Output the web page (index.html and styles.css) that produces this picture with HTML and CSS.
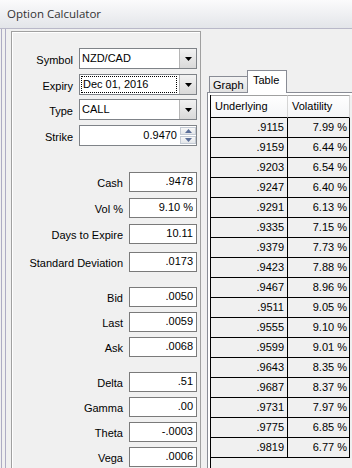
FILE: index.html
```html
<!DOCTYPE html>
<html lang="en">
<head>
    <meta charset="UTF-8">
    <title>Option Calculator</title>
    <link rel="stylesheet" href="styles.css">
</head>
<body>
    <div class="titlebar">Option Calculator</div>
    <div class="frame">
        <div class="frame-body">
            <div class="panel">
                <div class="row combo-row">
                    <label>Symbol</label>
                    <div class="combo">
                        <span class="combo-text">NZD/CAD</span>
                        <span class="drop"><svg width="7" height="4"><polygon points="0,0 7,0 3.5,4" fill="#000"/></svg></span>
                    </div>
                </div>
                <div class="row combo-row">
                    <label>Expiry</label>
                    <div class="combo">
                        <span class="combo-text focused">Dec 01, 2016</span>
                        <span class="drop"><svg width="7" height="4"><polygon points="0,0 7,0 3.5,4" fill="#000"/></svg></span>
                    </div>
                </div>
                <div class="row combo-row tight">
                    <label>Type</label>
                    <div class="combo">
                        <span class="combo-text">CALL</span>
                        <span class="drop"><svg width="7" height="4"><polygon points="0,0 7,0 3.5,4" fill="#000"/></svg></span>
                    </div>
                </div>
                <div class="row combo-row">
                    <label>Strike</label>
                    <div class="combo">
                        <span class="spin-text">0.9470</span>
                        <span class="spin">
                            <span class="spin-btn"><svg width="7" height="4"><polygon points="0,4 7,4 3.5,0" fill="#5b6f99"/></svg></span>
                            <span class="spin-btn"><svg width="7" height="4"><polygon points="0,0 7,0 3.5,4" fill="#5b6f99"/></svg></span>
                        </span>
                    </div>
                </div>

                <div class="row field-row group-first">
                    <label>Cash</label>
                    <div class="field">.9478</div>
                </div>
                <div class="row field-row m6">
                    <label>Vol %</label>
                    <div class="field">9.10 %</div>
                </div>
                <div class="row field-row m6">
                    <label>Days to Expire</label>
                    <div class="field">10.11</div>
                </div>
                <div class="row field-row m8">
                    <label>Standard Deviation</label>
                    <div class="field">.0173</div>
                </div>

                <div class="row field-row section">
                    <label>Bid</label>
                    <div class="field">.0050</div>
                </div>
                <div class="row field-row">
                    <label>Last</label>
                    <div class="field">.0059</div>
                </div>
                <div class="row field-row">
                    <label>Ask</label>
                    <div class="field">.0068</div>
                </div>

                <div class="row field-row section">
                    <label>Delta</label>
                    <div class="field">.51</div>
                </div>
                <div class="row field-row">
                    <label>Gamma</label>
                    <div class="field">.00</div>
                </div>
                <div class="row field-row">
                    <label>Theta</label>
                    <div class="field">-.0003</div>
                </div>
                <div class="row field-row">
                    <label>Vega</label>
                    <div class="field">.0006</div>
                </div>
            </div>

            <div class="tabs">
                <div class="tab-strip">
                    <span class="tab">Graph</span>
                    <span class="tab active">Table</span>
                </div>
                <div class="tab-page">
                    <div class="grid-wrap">
                        <table class="grid">
                            <thead>
                                <tr><th>Underlying</th><th>Volatility</th></tr>
                            </thead>
                            <tbody>
                                <tr><td>.9115</td><td>7.99 %</td></tr>
                                <tr><td>.9159</td><td>6.44 %</td></tr>
                                <tr><td>.9203</td><td>6.54 %</td></tr>
                                <tr><td>.9247</td><td>6.40 %</td></tr>
                                <tr><td>.9291</td><td>6.13 %</td></tr>
                                <tr><td>.9335</td><td>7.15 %</td></tr>
                                <tr><td>.9379</td><td>7.73 %</td></tr>
                                <tr><td>.9423</td><td>7.88 %</td></tr>
                                <tr><td>.9467</td><td>8.96 %</td></tr>
                                <tr><td>.9511</td><td>9.05 %</td></tr>
                                <tr><td>.9555</td><td>9.10 %</td></tr>
                                <tr><td>.9599</td><td>9.01 %</td></tr>
                                <tr><td>.9643</td><td>8.35 %</td></tr>
                                <tr><td>.9687</td><td>8.37 %</td></tr>
                                <tr><td>.9731</td><td>7.97 %</td></tr>
                                <tr><td>.9775</td><td>6.85 %</td></tr>
                                <tr><td>.9819</td><td>6.77 %</td></tr>
                            </tbody>
                        </table>
                    </div>
                </div>
            </div>
        </div>
    </div>
</body>
</html>
```

FILE: styles.css
```css
html, body {
    overflow: hidden;
}
body {
    margin: 0;
    height: 468px;
    background-color: #f0f0f0;
    font-family: "Liberation Sans", Arial, sans-serif;
    font-size: 11px;
    color: #000;
}
.titlebar {
    height: 28px;
    line-height: 28px;
    padding-left: 7px;
    border-bottom: 1px solid #b9b8c8;
    background: linear-gradient(#fbfbfc, #e3e5e9);
    font-family: "Open Sans", sans-serif;
    font-size: 11.5px;
    color: #333;
}
.frame {
    margin-left: 1px;
    border-left: 1px solid #aeacc4;
    height: 460px;
}
.frame-body {
    margin-left: 3px;
    border-left: 1px solid #aeacc4;
    padding-left: 5px;
    height: 100%;
    display: flex;
}

/* left panel */
.panel {
    width: 190px;
    flex-shrink: 0;
    box-sizing: border-box;
    margin-top: 2px;
    padding: 16px 3px 0 0;
    border: 1px solid #a0a0a0;
    border-bottom: none;
    box-shadow: inset 1px 1px #fff;
}
.row {
    display: flex;
}
.row + .row {
    margin-top: 5px;
}
.row label {
    flex: 1;
    text-align: right;
    margin-right: 6px;
    white-space: nowrap;
}
.combo-row {
    height: 21px;
}
.combo-row label {
    padding-top: 5px;
    line-height: 14px;
}
.row.tight {
    margin-top: 4px;
}
.combo {
    width: 118px;
    box-sizing: border-box;
    display: flex;
    border: 1px solid #7f8388;
    background-color: #fff;
}
.combo-text {
    flex: 1;
    padding-left: 2px;
    line-height: 19px;
}
.combo-text.focused {
    margin: 1px 2px 1px 1px;
    padding-left: 1px;
    line-height: 15px;
    border: 1px dotted #000;
}
.drop {
    width: 16px;
    display: flex;
    align-items: center;
    justify-content: center;
    border-left: 1px solid #b5b5b5;
    background: linear-gradient(#f2f2f2, #d9d9d9);
}
.spin-text {
    flex: 1;
    text-align: right;
    padding-right: 3px;
    line-height: 19px;
}
.spin {
    width: 16px;
    display: flex;
    flex-direction: column;
    gap: 1px;
    padding: 1px 0;
}
.spin-btn {
    flex: 1;
    display: flex;
    align-items: center;
    justify-content: center;
    border: 1px solid #c3cad4;
    background: linear-gradient(#f7f7f7, #e3e6ea);
}
.field-row {
    height: 20px;
}
.field-row label {
    padding-top: 3px;
    line-height: 17px;
}
.field {
    width: 68px;
    height: 20px;
    box-sizing: border-box;
    border: 1px solid #7a7a7a;
    background-color: #fff;
    text-align: right;
    padding-right: 3px;
    line-height: 17px;
}
.row.group-first {
    margin-top: 26px;
}
.row.m6 {
    margin-top: 6px;
}
.row.m8 {
    margin-top: 8px;
}
.row.section {
    margin-top: 15px;
}

/* tab control */
.tabs {
    width: 150px;
    flex-shrink: 0;
    margin-left: 6px;
    margin-top: 41px;
    display: flex;
    flex-direction: column;
}
.tab-strip {
    height: 22px;
    display: flex;
    align-items: flex-end;
    padding-left: 2px;
}
.tab {
    flex-shrink: 0;
    width: 40px;
    height: 16px;
    box-sizing: border-box;
    padding-left: 3px;
    border: 1px solid #898c95;
    border-bottom: none;
    background: linear-gradient(#f3f3f3, #e2e2e2);
    line-height: 16px;
    white-space: nowrap;
}
.tab.active {
    position: relative;
    z-index: 1;
    width: 40px;
    height: 23px;
    margin-left: -2px;
    margin-bottom: -1px;
    padding-left: 5px;
    background: #fff;
    line-height: 18px;
}
.tab-page {
    flex: 1;
    display: flex;
    border: 1px solid #898c95;
    background-color: #fff;
    padding: 2px 0 0 2px;
}
.grid-wrap {
    flex: 1;
    border-left: 1px solid #000;
    background-color: #f0f0f0;
}
.grid {
    border-spacing: 0;
    table-layout: fixed;
    width: 139px;
}
.grid th {
    height: 21px;
    padding: 0 0 0 4px;
    text-align: left;
    font-weight: normal;
    line-height: 21px;
    border-top: 1px solid #a0a0a0;
    border-bottom: 1px solid #000;
    border-right: 1px solid #d5d5d5;
    background: linear-gradient(#fff, #f4f5f7);
}
.grid th:first-child {
    width: 77px;
    box-sizing: border-box;
}
.grid td {
    height: 19px;
    padding: 0 3px 0 0;
    line-height: 19px;
    text-align: right;
    border-right: 1px solid #000;
    border-bottom: 1px solid #000;
}
.grid td:last-child {
    padding-right: 2px;
}
```
